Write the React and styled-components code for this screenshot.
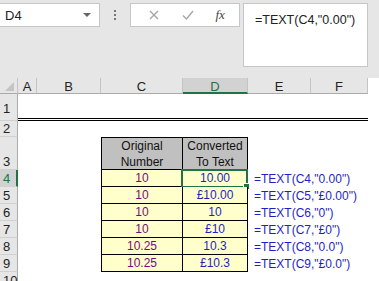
import React from "react";
import styled, { createGlobalStyle, css } from "styled-components";

const GREEN = "#217346";

const GlobalStyle = createGlobalStyle`
  body {
    margin: 0;
    background: #fff;
    font-family: "Liberation Sans", Arial, sans-serif;
  }
`;

const Toolbar = styled.div`
  height: 78px;
  background: #e6e6e6;
  display: flex;
  align-items: flex-start;
  padding-top: 3px;
  box-sizing: border-box;
`;

const NameBox = styled.div`
  width: 100px;
  height: 24px;
  box-sizing: border-box;
  background: #fff;
  border: 1px solid #c6c6c6;
  border-left: none;
  display: flex;
  align-items: center;
  justify-content: space-between;
  padding: 0 8px 0 5px;
  font-size: 13px;
  color: #222;
`;

const Caret = styled.span`
  width: 0;
  height: 0;
  border-left: 4px solid transparent;
  border-right: 4px solid transparent;
  border-top: 4px solid #666;
`;

const Dots = styled.div`
  width: 30px;
  height: 24px;
  display: flex;
  flex-direction: column;
  align-items: center;
  justify-content: center;
  gap: 2px;

  span {
    width: 2px;
    height: 2px;
    background: #777;
  }
`;

const Controls = styled.div`
  width: 110px;
  height: 24px;
  box-sizing: border-box;
  background: #fff;
  border: 1px solid #c6c6c6;
  display: flex;
  align-items: center;
  justify-content: space-around;
  padding: 0 4px 0 6px;
`;

const Fx = styled.span`
  font-family: "Liberation Serif", serif;
  font-style: italic;
  font-size: 13px;
  color: #444;
`;

const FormulaBox = styled.div`
  margin-left: 3px;
  width: 125px;
  height: 64px;
  box-sizing: border-box;
  background: #fff;
  border: 1px solid #c6c6c6;
  padding: 9px 0 0 11px;
  font-size: 12.5px;
  color: #222;
  white-space: nowrap;
`;

const Sheet = styled.div`
  width: 368px;
  display: grid;
  grid-template-columns: 18px 19px 64px 82px 65px 63px 57px;
  grid-template-rows: 16px 27px 16px 33px repeat(7, 17px);
`;

const Corner = styled.div`
  background: #e6e6e6;
  border-bottom: 1px solid #ababab;
  border-right: 1px solid #c4c4c4;
  position: relative;

  &::after {
    content: "";
    position: absolute;
    right: 3px;
    bottom: 2px;
    border-left: 9px solid transparent;
    border-bottom: 9px solid #c4c4c4;
  }
`;

const ColHead = styled.div`
  background: ${(p) => (p.$selected ? "#d2d2d2" : "#e6e6e6")};
  border-right: 1px solid #c4c4c4;
  border-bottom: ${(p) => (p.$selected ? `2px solid ${GREEN}` : "1px solid #ababab")};
  color: ${(p) => (p.$selected ? GREEN : "#222")};
  font-size: 13px;
  display: flex;
  align-items: center;
  justify-content: center;
  box-sizing: border-box;
  padding-top: 2px;
`;

const RowHead = styled.div`
  background: ${(p) => (p.$selected ? "#d2d2d2" : "#e6e6e6")};
  border-bottom: 1px solid #d0d0d0;
  border-right: ${(p) => (p.$selected ? `2px solid ${GREEN}` : "1px solid #ababab")};
  color: ${(p) => (p.$selected ? GREEN : "#222")};
  font-size: 13px;
  display: flex;
  align-items: flex-end;
  padding: 0 0 ${(p) => p.$lift || 0}px 3px;
  box-sizing: border-box;
  line-height: 15px;
`;

const Cell = styled.div`
  box-sizing: border-box;
  font-size: 12px;
  display: flex;
  align-items: flex-end;
  justify-content: center;
  line-height: 15px;
  white-space: nowrap;
  position: relative;
  ${(p) => p.$double && css`border-bottom: 3px double #000;`}
  ${(p) =>
    p.$table &&
    css`
      background: ${p.$head ? "#c0c0c0" : "#ffffcc"};
      border-right: 1px solid #000;
      border-bottom: 1px solid #000;
    `}
  ${(p) => p.$first && css`border-left: 1px solid #000;`}
  ${(p) => p.$top && css`border-top: 1px solid #000;`}
  ${(p) => p.$head && css`flex-direction: column; align-items: center; justify-content: center; line-height: 16px; color: #111;`}
  color: ${(p) => p.$color || "#111"};
`;

const Note = styled(Cell)`
  justify-content: flex-start;
  padding-left: 6px;
  overflow: visible;
  grid-column: span 2;
`;

const Selection = styled.div`
  position: absolute;
  left: -2px;
  top: -1px;
  right: -1px;
  bottom: -2px;
  border: 2px solid ${GREEN};
  pointer-events: none;

  &::after {
    content: "";
    position: absolute;
    right: -4px;
    bottom: -4px;
    width: 5px;
    height: 5px;
    background: ${GREEN};
    border: 1px solid #fff;
  }
`;

const Icon = ({ d, color }) => (
  <svg width="14" height="14" viewBox="0 0 14 14">
    <path d={d} fill="none" stroke={color} strokeWidth="1.4" />
  </svg>
);

const cols = ["A", "B", "C", "D", "E", "F"];

const rows = [
  { n: 4, orig: "10", conv: "10.00", f: '=TEXT(C4,"0.00")' },
  { n: 5, orig: "10", conv: "£10.00", f: '=TEXT(C5,"£0.00")' },
  { n: 6, orig: "10", conv: "10", f: '=TEXT(C6,"0")' },
  { n: 7, orig: "10", conv: "£10", f: '=TEXT(C7,"£0")' },
  { n: 8, orig: "10.25", conv: "10.3", f: '=TEXT(C8,"0.0")' },
  { n: 9, orig: "10.25", conv: "£10.3", f: '=TEXT(C9,"£0.0")' },
];

const PURPLE = "#7a0a7a";
const BLUE = "#1f1fc4";

export default function App() {
  return (
    <>
      <GlobalStyle />
      <Toolbar>
        <NameBox>
          D4
          <Caret />
        </NameBox>
        <Dots>
          <span />
          <span />
          <span />
        </Dots>
        <Controls>
          <Icon d="M3 3 L11 11 M11 3 L3 11" color="#a6a6a6" />
          <Icon d="M2 7.5 L5.5 11 L12 3" color="#a6a6a6" />
          <Fx>fx</Fx>
        </Controls>
        <FormulaBox>=TEXT(C4,"0.00")</FormulaBox>
      </Toolbar>
      <Sheet>
        <Corner />
        {cols.map((c) => (
          <ColHead key={c} $selected={c === "D"}>
            {c}
          </ColHead>
        ))}

        <RowHead $lift={4}>1</RowHead>
        {cols.map((c) => (
          <Cell key={c} $double />
        ))}

        <RowHead>2</RowHead>
        {cols.map((c) => (
          <Cell key={c} />
        ))}

        <RowHead>3</RowHead>
        <Cell />
        <Cell />
        <Cell $table $head $first $top>
          <span>Original</span>
          <span>Number</span>
        </Cell>
        <Cell $table $head $top>
          <span>Converted</span>
          <span>To Text</span>
        </Cell>
        <Cell />
        <Cell />

        {rows.map((r) => (
          <React.Fragment key={r.n}>
            <RowHead $selected={r.n === 4}>{r.n}</RowHead>
            <Cell />
            <Cell />
            <Cell $table $first $color={PURPLE}>
              {r.orig}
            </Cell>
            <Cell $table $color={BLUE}>
              {r.conv}
              {r.n === 4 && <Selection />}
            </Cell>
            <Note $color={BLUE}>{r.f}</Note>
          </React.Fragment>
        ))}

        <RowHead>10</RowHead>
      </Sheet>
    </>
  );
}
